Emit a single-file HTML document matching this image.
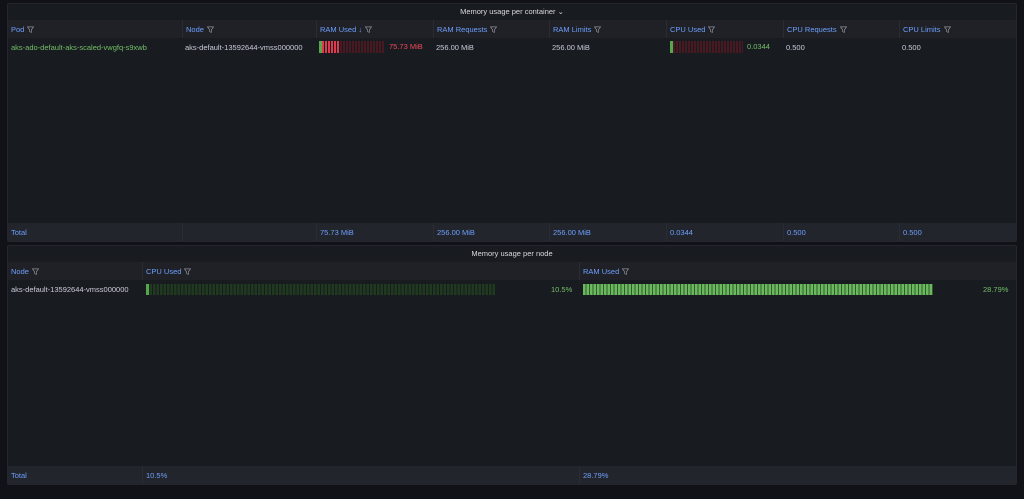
<!DOCTYPE html>
<html><head><meta charset="utf-8"><style>
*{box-sizing:border-box;margin:0;padding:0}
body{width:1024px;height:499px;background:#111217;font-family:"Liberation Sans",sans-serif;font-size:7.5px;color:#ccccdc;position:relative;overflow:hidden}
.panel{position:absolute;background:#181b1f;border:1px solid #24262d;border-radius:2px}
.title{position:absolute;left:0;right:0;text-align:center;font-size:7.5px;color:#d8d9e0}
.row{position:absolute;left:0;right:0}
.hdr{background:#1f2126}
.ftr{background:#22252b}
.c{position:absolute;top:0;bottom:0;display:flex;align-items:center;padding-left:3px;border-left:1px solid #2a2c33;white-space:nowrap}
.c:first-child{border-left:none}
.data .c{border-left:none}
.blue{color:#6e9fff}
.green{color:#73bf69}
.red{color:#f2495c}
.f{display:inline-block;width:7px;height:7px;margin-left:3px;vertical-align:middle}
.bar{position:absolute}
</style></head><body>

<div class="panel" style="left:7px;top:3px;width:1010px;height:239px">
  <div class="title" style="top:3px">Memory usage per container ⌄</div>
  <div class="row hdr" style="top:16px;height:18px">
    <div class="c blue" style="left:0;width:174px">Pod<svg class="f" viewBox="0 0 8 8"><path d="M0.5 1h7L5 4.3V7.3L3 6.3V4.3z" fill="none" stroke="#8e8e99" stroke-width=".8"/></svg></div>
    <div class="c blue" style="left:174px;width:134px">Node<svg class="f" viewBox="0 0 8 8"><path d="M0.5 1h7L5 4.3V7.3L3 6.3V4.3z" fill="none" stroke="#8e8e99" stroke-width=".8"/></svg></div>
    <div class="c blue" style="left:308px;width:117px">RAM Used ↓<svg class="f" viewBox="0 0 8 8"><path d="M0.5 1h7L5 4.3V7.3L3 6.3V4.3z" fill="none" stroke="#8e8e99" stroke-width=".8"/></svg></div>
    <div class="c blue" style="left:425px;width:116px">RAM Requests<svg class="f" viewBox="0 0 8 8"><path d="M0.5 1h7L5 4.3V7.3L3 6.3V4.3z" fill="none" stroke="#8e8e99" stroke-width=".8"/></svg></div>
    <div class="c blue" style="left:541px;width:117px">RAM Limits<svg class="f" viewBox="0 0 8 8"><path d="M0.5 1h7L5 4.3V7.3L3 6.3V4.3z" fill="none" stroke="#8e8e99" stroke-width=".8"/></svg></div>
    <div class="c blue" style="left:658px;width:117px">CPU Used<svg class="f" viewBox="0 0 8 8"><path d="M0.5 1h7L5 4.3V7.3L3 6.3V4.3z" fill="none" stroke="#8e8e99" stroke-width=".8"/></svg></div>
    <div class="c blue" style="left:775px;width:116px">CPU Requests<svg class="f" viewBox="0 0 8 8"><path d="M0.5 1h7L5 4.3V7.3L3 6.3V4.3z" fill="none" stroke="#8e8e99" stroke-width=".8"/></svg></div>
    <div class="c blue" style="left:891px;width:117px">CPU Limits<svg class="f" viewBox="0 0 8 8"><path d="M0.5 1h7L5 4.3V7.3L3 6.3V4.3z" fill="none" stroke="#8e8e99" stroke-width=".8"/></svg></div>
  </div>
  <div class="row data" style="top:34px;height:19px">
    <div class="c green" style="left:0;width:174px">aks-ado-default-aks-scaled-vwgfq-s9xwb</div>
    <div class="c" style="left:174px;width:134px">aks-default-13592644-vmss000000</div>
    <div class="c" style="left:425px;width:116px">256.00 MiB</div>
    <div class="c" style="left:541px;width:117px">256.00 MiB</div>
    <div class="c" style="left:775px;width:116px">0.500</div>
    <div class="c" style="left:891px;width:117px">0.500</div>
  </div>
  <div class="bar" style="left:311px;top:37px;width:65px;height:12px;background:repeating-linear-gradient(90deg,#4a1820 0 2px,transparent 2px 3px)"></div>
  <div class="bar" style="left:311px;top:37px;width:21px;height:12px;background:repeating-linear-gradient(90deg,#e0394d 0 2px,transparent 2px 3px)"></div>
  <div class="bar" style="left:311px;top:37px;width:3px;height:12px;background:#56a64b"></div>
  <div class="bar red" style="left:381px;top:38px;line-height:10px">75.73 MiB</div>
  <div class="bar" style="left:662px;top:37px;width:73px;height:12px;background:repeating-linear-gradient(90deg,#4a1820 0 2px,transparent 2px 3px)"></div>
  <div class="bar" style="left:662px;top:37px;width:3px;height:12px;background:#56a64b"></div>
  <div class="bar green" style="left:739px;top:38px;line-height:10px">0.0344</div>
  <div class="row ftr" style="top:219px;height:18px">
    <div class="c blue" style="left:0;width:174px">Total</div>
    <div class="c" style="left:174px;width:134px"></div>
    <div class="c blue" style="left:308px;width:117px">75.73 MiB</div>
    <div class="c blue" style="left:425px;width:116px">256.00 MiB</div>
    <div class="c blue" style="left:541px;width:117px">256.00 MiB</div>
    <div class="c blue" style="left:658px;width:117px">0.0344</div>
    <div class="c blue" style="left:775px;width:116px">0.500</div>
    <div class="c blue" style="left:891px;width:117px">0.500</div>
  </div>
</div>

<div class="panel" style="left:7px;top:245px;width:1010px;height:240px">
  <div class="title" style="top:3px">Memory usage per node</div>
  <div class="row hdr" style="top:16px;height:18px">
    <div class="c blue" style="left:0;width:134px">Node<svg class="f" viewBox="0 0 8 8"><path d="M0.5 1h7L5 4.3V7.3L3 6.3V4.3z" fill="none" stroke="#8e8e99" stroke-width=".8"/></svg></div>
    <div class="c blue" style="left:134px;width:437px">CPU Used<svg class="f" viewBox="0 0 8 8"><path d="M0.5 1h7L5 4.3V7.3L3 6.3V4.3z" fill="none" stroke="#8e8e99" stroke-width=".8"/></svg></div>
    <div class="c blue" style="left:571px;width:437px">RAM Used<svg class="f" viewBox="0 0 8 8"><path d="M0.5 1h7L5 4.3V7.3L3 6.3V4.3z" fill="none" stroke="#8e8e99" stroke-width=".8"/></svg></div>
  </div>
  <div class="row data" style="top:34px;height:19px">
    <div class="c" style="left:0;width:134px">aks-default-13592644-vmss000000</div>
  </div>
  <div class="bar" style="left:138px;top:38px;width:350px;height:11px;background:repeating-linear-gradient(90deg,#1f3a1f 0 2.5px,transparent 2.5px 3.5px)"></div>
  <div class="bar" style="left:138px;top:38px;width:3px;height:11px;background:#56a64b"></div>
  <div class="bar green" style="left:543px;top:39px;line-height:10px">10.5%</div>
  <div class="bar" style="left:575px;top:38px;width:350px;height:11px;background:repeating-linear-gradient(90deg,#6cb85f 0 2.5px,#2f5a2c 2.5px 3.5px)"></div>
  <div class="bar green" style="left:975px;top:39px;line-height:10px">28.79%</div>
  <div class="row ftr" style="top:220px;height:18px">
    <div class="c blue" style="left:0;width:134px">Total</div>
    <div class="c blue" style="left:134px;width:437px">10.5%</div>
    <div class="c blue" style="left:571px;width:437px">28.79%</div>
  </div>
</div>
</body></html>
